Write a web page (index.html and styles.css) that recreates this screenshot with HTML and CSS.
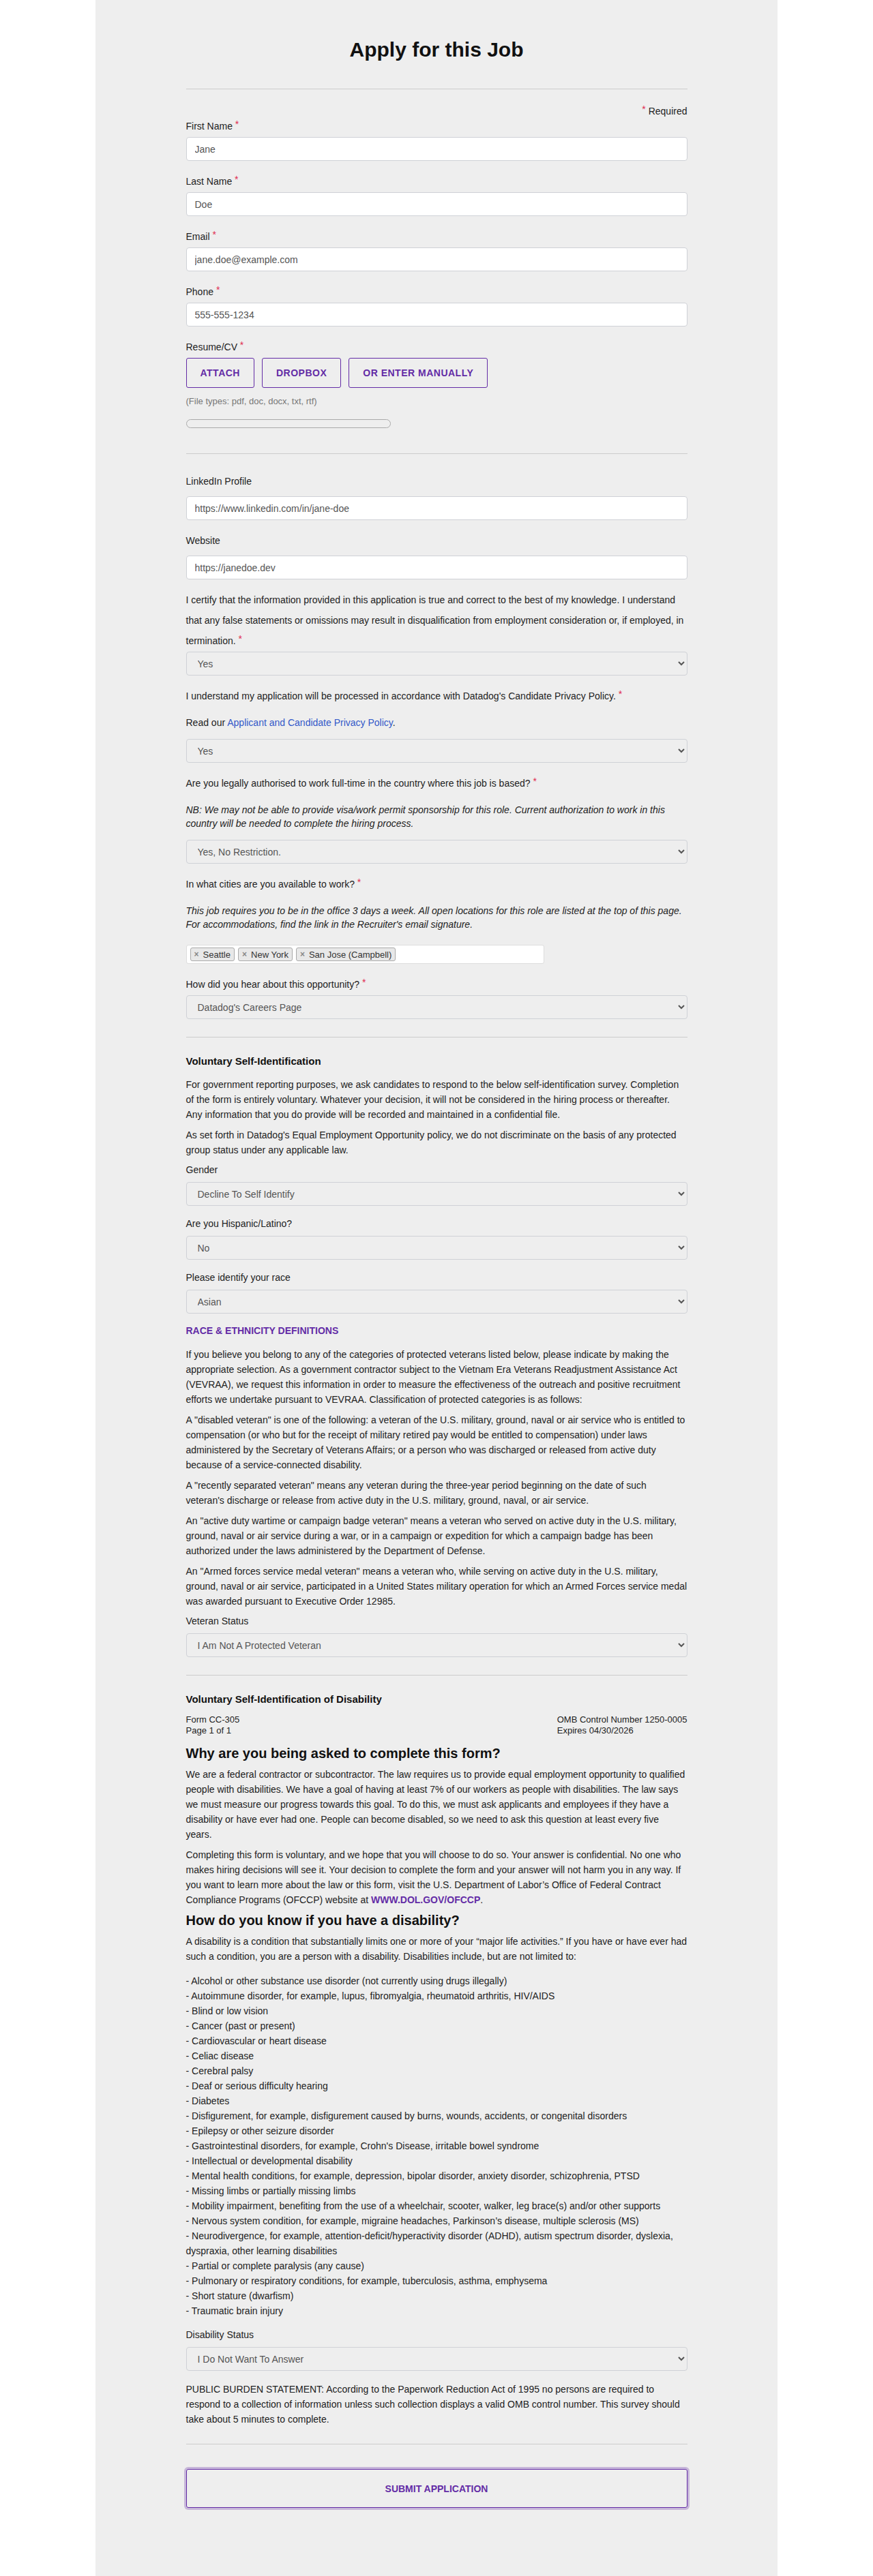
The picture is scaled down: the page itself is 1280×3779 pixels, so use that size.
FILE: index.html
```html
<!DOCTYPE html>
<html lang="en">
<head>
<meta charset="utf-8">
<title>Apply for this Job</title>
<link rel="stylesheet" href="styles.css">
</head>
<body>
<div class="page">
  <div class="inner">
    <h1 class="title">Apply for this Job</h1>
    <div class="divider div-top"></div>
    <div class="required"><span class="ast">*</span> Required</div>

    <div class="field first">
      <label class="lbl">First Name <span class="ast">*</span></label>
      <input class="inp" type="text" value="Jane">
    </div>
    <div class="field">
      <label class="lbl">Last Name <span class="ast">*</span></label>
      <input class="inp" type="text" value="Doe">
    </div>
    <div class="field">
      <label class="lbl">Email <span class="ast">*</span></label>
      <input class="inp" type="text" value="jane.doe@example.com">
    </div>
    <div class="field">
      <label class="lbl">Phone <span class="ast">*</span></label>
      <input class="inp" type="text" value="555-555-1234">
    </div>
    <div class="field">
      <label class="lbl">Resume/CV <span class="ast">*</span></label>
      <div class="btn-row">
        <button class="obtn" type="button">ATTACH</button>
        <button class="obtn" type="button">DROPBOX</button>
        <button class="obtn" type="button">OR ENTER MANUALLY</button>
      </div>
      <div class="filetypes">(File types: pdf, doc, docx, txt, rtf)</div>
      <div class="progress"></div>
    </div>

    <div class="divider div-resume"></div>

    <div class="cfield linkedin">
      <label class="lbl">LinkedIn Profile</label>
      <input class="inp" type="text" value="https://www.linkedin.com/in/jane-doe">
    </div>
    <div class="cfield">
      <label class="lbl">Website</label>
      <input class="inp" type="text" value="https://janedoe.dev">
    </div>

    <div class="qfield">
      <label class="qlbl">I certify that the information provided in this application is true and correct to the best of my knowledge. I understand that any false statements or omissions may result in disqualification from employment consideration or, if employed, in termination. <span class="ast">*</span></label>
      <select class="sel"><option>Yes</option></select>
    </div>
    <div class="qfield">
      <label class="qlbl">I understand my application will be processed in accordance with Datadog's Candidate Privacy Policy. <span class="ast">*</span></label>
      <p class="qdesc">Read our <a class="link" href="#">Applicant and Candidate Privacy Policy</a>.</p>
      <select class="sel"><option>Yes</option></select>
    </div>
    <div class="qfield">
      <label class="qlbl">Are you legally authorised to work full-time in the country where this job is based? <span class="ast">*</span></label>
      <p class="qdesc italic">NB: We may not be able to provide visa/work permit sponsorship for this role. Current authorization to work in this country will be needed to complete the hiring process.</p>
      <select class="sel"><option>Yes, No Restriction.</option></select>
    </div>
    <div class="qfield">
      <label class="qlbl">In what cities are you available to work? <span class="ast">*</span></label>
      <p class="qdesc italic">This job requires you to be in the office 3 days a week. All open locations for this role are listed at the top of this page. For accommodations, find the link in the Recruiter's email signature.</p>
      <div class="tagbox">
        <span class="chip"><span class="chip-x">×</span>Seattle</span>
        <span class="chip"><span class="chip-x">×</span>New York</span>
        <span class="chip"><span class="chip-x">×</span>San Jose (Campbell)</span>
      </div>
    </div>
    <div class="qfield">
      <label class="qlbl">How did you hear about this opportunity? <span class="ast">*</span></label>
      <select class="sel"><option>Datadog's Careers Page</option></select>
    </div>

    <div class="divider div-eeo"></div>

    <h3 class="sec-title">Voluntary Self-Identification</h3>
    <p class="copy first-copy">For government reporting purposes, we ask candidates to respond to the below self-identification survey. Completion of the form is entirely voluntary. Whatever your decision, it will not be considered in the hiring process or thereafter. Any information that you do provide will be recorded and maintained in a confidential file.</p>
    <p class="copy">As set forth in Datadog's Equal Employment Opportunity policy, we do not discriminate on the basis of any protected group status under any applicable law.</p>

    <div class="efield efirst">
      <label class="lbl">Gender</label>
      <select class="sel"><option>Decline To Self Identify</option></select>
    </div>
    <div class="efield">
      <label class="lbl">Are you Hispanic/Latino?</label>
      <select class="sel"><option>No</option></select>
    </div>
    <div class="efield">
      <label class="lbl">Please identify your race</label>
      <select class="sel"><option>Asian</option></select>
    </div>

    <a class="defs" href="#">RACE &amp; ETHNICITY DEFINITIONS</a>

    <p class="copy vet-first">If you believe you belong to any of the categories of protected veterans listed below, please indicate by making the appropriate selection. As a government contractor subject to the Vietnam Era Veterans Readjustment Assistance Act (VEVRAA), we request this information in order to measure the effectiveness of the outreach and positive recruitment efforts we undertake pursuant to VEVRAA. Classification of protected categories is as follows:</p>
    <p class="copy">A "disabled veteran" is one of the following: a veteran of the U.S. military, ground, naval or air service who is entitled to compensation (or who but for the receipt of military retired pay would be entitled to compensation) under laws administered by the Secretary of Veterans Affairs; or a person who was discharged or released from active duty because of a service-connected disability.</p>
    <p class="copy">A "recently separated veteran" means any veteran during the three-year period beginning on the date of such veteran's discharge or release from active duty in the U.S. military, ground, naval, or air service.</p>
    <p class="copy">An "active duty wartime or campaign badge veteran" means a veteran who served on active duty in the U.S. military, ground, naval or air service during a war, or in a campaign or expedition for which a campaign badge has been authorized under the laws administered by the Department of Defense.</p>
    <p class="copy">An "Armed forces service medal veteran" means a veteran who, while serving on active duty in the U.S. military, ground, naval or air service, participated in a United States military operation for which an Armed Forces service medal was awarded pursuant to Executive Order 12985.</p>

    <div class="efield vet-field">
      <label class="lbl">Veteran Status</label>
      <select class="sel"><option>I Am Not A Protected Veteran</option></select>
    </div>

    <div class="divider div-eeo"></div>

    <h3 class="sec-title">Voluntary Self-Identification of Disability</h3>
    <div class="form-head">
      <div>Form CC-305<br>Page 1 of 1</div>
      <div>OMB Control Number 1250-0005<br>Expires 04/30/2026</div>
    </div>

    <h2 class="dis-h first-h">Why are you being asked to complete this form?</h2>
    <p class="copy">We are a federal contractor or subcontractor. The law requires us to provide equal employment opportunity to qualified people with disabilities. We have a goal of having at least 7% of our workers as people with disabilities. The law says we must measure our progress towards this goal. To do this, we must ask applicants and employees if they have a disability or have ever had one. People can become disabled, so we need to ask this question at least every five years.</p>
    <p class="copy">Completing this form is voluntary, and we hope that you will choose to do so. Your answer is confidential. No one who makes hiring decisions will see it. Your decision to complete the form and your answer will not harm you in any way. If you want to learn more about the law or this form, visit the U.S. Department of Labor’s Office of Federal Contract Compliance Programs (OFCCP) website at <a class="dol" href="#">WWW.DOL.GOV/OFCCP</a>.</p>

    <h2 class="dis-h">How do you know if you have a disability?</h2>
    <p class="copy">A disability is a condition that substantially limits one or more of your “major life activities.” If you have or have ever had such a condition, you are a person with a disability. Disabilities include, but are not limited to:</p>

    <div class="dis-list">
      <div>- Alcohol or other substance use disorder (not currently using drugs illegally)</div>
      <div>- Autoimmune disorder, for example, lupus, fibromyalgia, rheumatoid arthritis, HIV/AIDS</div>
      <div>- Blind or low vision</div>
      <div>- Cancer (past or present)</div>
      <div>- Cardiovascular or heart disease</div>
      <div>- Celiac disease</div>
      <div>- Cerebral palsy</div>
      <div>- Deaf or serious difficulty hearing</div>
      <div>- Diabetes</div>
      <div>- Disfigurement, for example, disfigurement caused by burns, wounds, accidents, or congenital disorders</div>
      <div>- Epilepsy or other seizure disorder</div>
      <div>- Gastrointestinal disorders, for example, Crohn's Disease, irritable bowel syndrome</div>
      <div>- Intellectual or developmental disability</div>
      <div>- Mental health conditions, for example, depression, bipolar disorder, anxiety disorder, schizophrenia, PTSD</div>
      <div>- Missing limbs or partially missing limbs</div>
      <div>- Mobility impairment, benefiting from the use of a wheelchair, scooter, walker, leg brace(s) and/or other supports</div>
      <div>- Nervous system condition, for example, migraine headaches, Parkinson’s disease, multiple sclerosis (MS)</div>
      <div>- Neurodivergence, for example, attention-deficit/hyperactivity disorder (ADHD), autism spectrum disorder, dyslexia, dyspraxia, other learning disabilities</div>
      <div>- Partial or complete paralysis (any cause)</div>
      <div>- Pulmonary or respiratory conditions, for example, tuberculosis, asthma, emphysema</div>
      <div>- Short stature (dwarfism)</div>
      <div>- Traumatic brain injury</div>
    </div>

    <div class="efield dis-field">
      <label class="lbl">Disability Status</label>
      <select class="sel"><option>I Do Not Want To Answer</option></select>
    </div>

    <p class="copy burden">PUBLIC BURDEN STATEMENT: According to the Paperwork Reduction Act of 1995 no persons are required to respond to a collection of information unless such collection displays a valid OMB control number. This survey should take about 5 minutes to complete.</p>

    <div class="divider div-submit"></div>

    <button class="submit" type="button">SUBMIT APPLICATION</button>
  </div>
</div>
</body>
</html>
```

FILE: styles.css
```css
* {
  box-sizing: border-box;
}

html, body {
  margin: 0;
  padding: 0;
}

body {
  background: #ffffff;
  font-family: "Liberation Sans", Arial, sans-serif;
  font-size: 14px;
  color: #222222;
}

.page {
  width: 1000px;
  min-height: 3779px;
  margin: 0 auto;
  background: #eeeeee;
  padding-top: 55px;
}

.inner {
  width: 735px;
  margin: 0 auto;
}

.title {
  margin: 0;
  font-size: 30px;
  line-height: 36px;
  font-weight: bold;
  text-align: center;
  color: #111111;
}

.divider {
  height: 1px;
  background: #cccccc;
}

.div-top {
  margin-top: 39px;
}

.div-resume {
  margin-top: 37px;
}

.div-eeo {
  margin-top: 26px;
}

.div-submit {
  margin-top: 25px;
}

.required {
  margin-top: 22px;
  line-height: 20px;
  text-align: right;
}

.ast {
  color: #e0284f;
  line-height: 0;
  vertical-align: 3px;
}

.field {
  margin-top: 20px;
}

.field.first {
  margin-top: 2px;
}

.lbl {
  display: block;
  line-height: 20px;
  margin-bottom: 6px;
}

.inp {
  display: block;
  width: 100%;
  height: 35px;
  padding: 0 12px;
  border: 1px solid #cfd1d6;
  border-radius: 4px;
  background: #ffffff;
  font-family: "Liberation Sans", Arial, sans-serif;
  font-size: 14px;
  color: #555555;
  outline: none;
}

.sel {
  display: block;
  width: 100%;
  height: 35px;
  padding: 0 12px;
  border: 1px solid #cfd1d6;
  border-radius: 4px;
  background-color: transparent;
  font-family: "Liberation Sans", Arial, sans-serif;
  font-size: 14px;
  color: #555555;
  outline: none;
}

.btn-row {
  display: flex;
  gap: 11px;
}

.obtn {
  height: 44px;
  padding: 0 20px;
  border: 1px solid #632ca6;
  border-radius: 3px;
  background: transparent;
  font-family: "Liberation Sans", Arial, sans-serif;
  font-size: 14px;
  font-weight: bold;
  letter-spacing: 0.5px;
  color: #632ca6;
}

.filetypes {
  margin-top: 11px;
  font-size: 13px;
  line-height: 18px;
  color: #777777;
}

.progress {
  margin-top: 17px;
  width: 300px;
  height: 13px;
  border: 1px solid #aaaaaa;
  border-radius: 7px;
  background: #eeeeee;
}

.cfield {
  margin-top: 20px;
}

.cfield.linkedin {
  margin-top: 30px;
}

.cfield .lbl {
  margin-bottom: 12px;
}

.qfield {
  margin-top: 15px;
}

.qlbl {
  display: block;
  line-height: 30px;
  margin-bottom: 1px;
}

.qdesc {
  margin: 14px 0 14px;
  line-height: 20px;
}

.italic {
  font-style: italic;
}

.link {
  color: #3258c9;
  text-decoration: none;
}

.tagbox {
  display: flex;
  align-items: center;
  gap: 5px;
  width: 525px;
  height: 28px;
  margin-top: 20px;
  padding: 0 5px;
  border: 1px solid #dddddd;
  border-radius: 3px;
  background: #ffffff;
}

.qdesc + .tagbox {
  margin-top: 20px;
}

.chip {
  display: inline-flex;
  align-items: center;
  height: 20px;
  padding: 0 5px;
  border: 1px solid #aaaaaa;
  border-radius: 3px;
  background: #e8e8e8;
  font-size: 13px;
  color: #333333;
}

.chip-x {
  margin-right: 6px;
  font-weight: bold;
  font-size: 12px;
  color: #888888;
}

.sec-title {
  margin: 25px 0 0;
  font-size: 15px;
  line-height: 20px;
  font-weight: bold;
  color: #111111;
}

.copy {
  margin: 8px 0 0;
  line-height: 22px;
}

.first-copy {
  margin-top: 13px;
}

.efield {
  margin-top: 16px;
}

.efield .lbl {
  margin-bottom: 8px;
}

.efield.efirst,
.efield.vet-field {
  margin-top: 8px;
}

.defs {
  display: block;
  margin-top: 15px;
  line-height: 20px;
  font-weight: bold;
  color: #632ca6;
  text-decoration: none;
}

.vet-first {
  margin-top: 14px;
}

.form-head {
  display: flex;
  justify-content: space-between;
  margin-top: 12px;
  font-size: 13px;
  line-height: 15.5px;
}

.dis-h {
  margin: 7px 0 0;
  font-size: 20px;
  line-height: 24px;
  font-weight: bold;
  color: #111111;
}

.dis-h.first-h {
  margin-top: 14px;
}

.dol {
  font-weight: bold;
  color: #632ca6;
  text-decoration: none;
}

.dis-list {
  margin-top: 14px;
  line-height: 22px;
}

.efield.dis-field {
  margin-top: 14px;
}

.burden {
  margin-top: 16px;
}

.submit {
  display: block;
  width: 100%;
  height: 57px;
  margin-top: 36px;
  border: 1px solid #632ca6;
  border-radius: 3px;
  background: transparent;
  box-shadow: 0 0 0 3px rgba(99, 44, 166, 0.28);
  font-family: "Liberation Sans", Arial, sans-serif;
  font-size: 14px;
  font-weight: bold;
  color: #632ca6;
}
```
